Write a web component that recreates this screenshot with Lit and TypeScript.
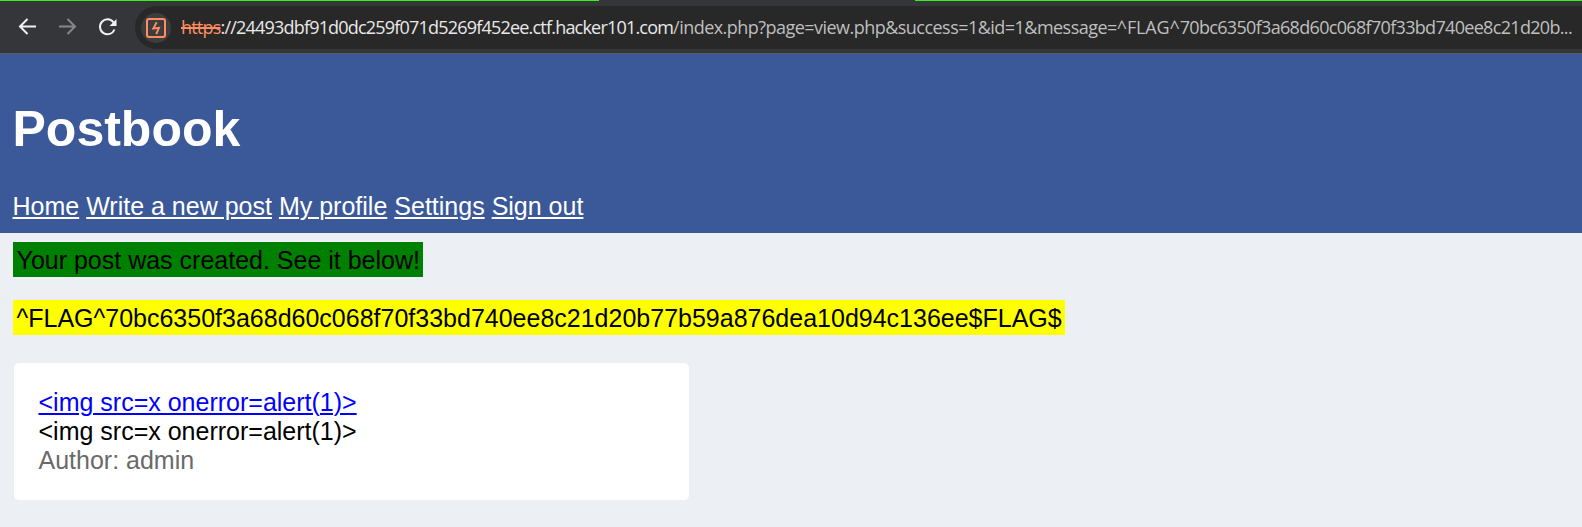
import { LitElement, html, css } from "lit";
import { customElement } from "lit/decorators.js";

@customElement("browser-bar")
class BrowserBar extends LitElement {
  static styles = css`
    :host { display: block; }
    .strip { display: grid; grid-template-columns: 599px 316px 1fr; height: 1px; }
    .green { background: #36f11d; }
    .bar {
      box-sizing: border-box; height: 53px; padding: 5px 0 4px; display: flex;
      background: #35363a; border-bottom: 1px solid #5b5c60;
    }
    .tools { width: 135px; flex: none; display: block; }
    .field {
      flex: 1; min-width: 0; height: 43px; display: flex; align-items: center;
      background: #282828; border-radius: 22px 0 0 22px; overflow: hidden;
    }
    .badge { flex: none; margin-left: 6px; margin-right: 10px; display: block; }
    .url {
      font: 18px/26px "Open Sans", "Noto Sans", sans-serif; white-space: nowrap;
      color: #bfbfbf; display: flex; padding-bottom: 2px;
    }
    .scheme { color: #ff8d62; text-decoration: line-through; text-decoration-thickness: 2px; letter-spacing: -0.8px; }
    .host { color: #e8e8e8; letter-spacing: -0.8px; }
    .query { letter-spacing: -0.53px; }
    .mark { letter-spacing: -0.13px; }
    .hash { letter-spacing: -0.68px; }
  `;
  render() {
    return html`
      <div class="strip"><span class="green"></span><span></span><span class="green"></span></div>
      <div class="bar">
        <svg class="tools" width="135" height="43" viewBox="0 6 135 43" fill="none" stroke-width="2">
          <path d="M36 26.500H20.500M27.500 19L20 26.500l7.500 7.500" stroke="#f1f1f1" />
          <path d="M59 26.500H75M67.500 19l7.500 7.500-7.500 7.500" stroke="#86878a" />
          <path d="M113.500 22.300A7.500 7.500 0 1 0 114.500 29.500" stroke="#f1f1f1" />
          <path d="M116.500 19V26h-7z" fill="#f1f1f1" />
        </svg>
        <div class="field">
          <svg class="badge" width="30" height="30" viewBox="0 0 30 30">
            <circle cx="15" cy="15" r="15" fill="#3d3d3d" />
            <rect x="6" y="6" width="18" height="18" rx="2" fill="none" stroke="#ff8d62" stroke-width="2" />
            <path d="M15.700 9.300L12.300 15.500L18 14.800L15.200 21.200" fill="none" stroke="#ff8d62" stroke-width="1.900" />
          </svg>
          <div class="url"><span class="scheme">https</span><span class="host">://24493dbf91d0dc259f071d5269f452ee.ctf.hacker101.com</span><span class="query">/index.php?page=view.php&amp;success=1&amp;id=1&amp;message=</span><span class="mark">^FLAG^</span><span class="hash">70bc6350f3a68d60c068f70f33bd740ee8c21d20b...</span></div>
        </div>
      </div>
    `;
  }
}

@customElement("app-root")
class AppRoot extends LitElement {
  static styles = css`
    :host {
      display: block; height: 527px; overflow: hidden; background: #eceff4;
      font: 25px/29px "Liberation Sans", Arial, sans-serif; color: #000;
    }
    .top { background: #35363a; }
    .header { box-sizing: border-box; height: 179px; background: #3b5998; color: #fff; padding: 47px 12.500px 0; }
    .title { margin: 0; font-size: 50px; line-height: 57px; font-weight: bold; }
    .nav { margin-top: 34px; display: flex; gap: 7px; }
    .nav a, .card a { text-decoration: underline; text-decoration-thickness: 2px; text-underline-offset: 2px; }
    .nav a { color: #fff; }
    .content { padding: 9px 13px 0; display: flex; flex-direction: column; align-items: flex-start; }
    .note { padding: 4px 3.500px 2px; white-space: nowrap; }
    .ok { background: #008000; }
    .flag { background: #ff0; margin-top: 23px; }
    .card {
      box-sizing: border-box; width: 675px; height: 137px; margin: 28px 0 0 1px; padding: 25px 24.500px;
      background: #fff; border-radius: 5px; display: flex; flex-direction: column; align-items: flex-start;
    }
    .card a { color: #00f; }
    .author { color: #6a6a6a; }
  `;
  render() {
    const post = "<img src=x onerror=alert(1)>";
    const links = ["Home", "Write a new post", "My profile", "Settings", "Sign out"];
    return html`
      <browser-bar class="top"></browser-bar>
      <header class="header">
        <h1 class="title">Postbook</h1>
        <nav class="nav">${links.map((l) => html`<a>${l}</a>`)}</nav>
      </header>
      <main class="content">
        <div class="note ok">Your post was created. See it below!</div>
        <div class="note flag">^FLAG^70bc6350f3a68d60c068f70f33bd740ee8c21d20b77b59a876dea10d94c136ee$FLAG$</div>
        <article class="card">
          <a>${post}</a>
          <span>${post}</span>
          <span class="author">Author: admin</span>
        </article>
      </main>
    `;
  }
}
